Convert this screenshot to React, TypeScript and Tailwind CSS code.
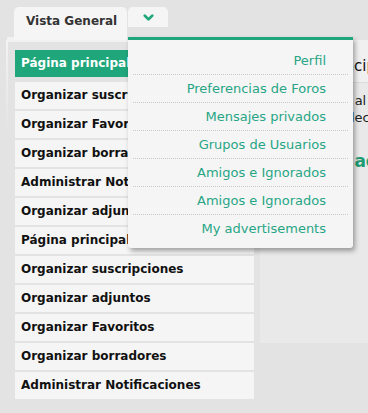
import { ChevronDown } from "lucide-react";

const menuItems = [
  "Página principal",
  "Organizar suscripciones",
  "Organizar Favoritos",
  "Organizar borradores",
  "Administrar Notificaciones",
  "Organizar adjuntos",
  "Página principal",
  "Organizar suscripciones",
  "Organizar adjuntos",
  "Organizar Favoritos",
  "Organizar borradores",
  "Administrar Notificaciones",
];

const dropdownItems = [
  "Perfil",
  "Preferencias de Foros",
  "Mensajes privados",
  "Grupos de Usuarios",
  "Amigos e Ignorados",
  "Amigos e Ignorados",
  "My advertisements",
];

export default function App() {
  return (
    <div className="relative h-[413px] w-full overflow-hidden bg-[#e3e3e3] font-['DejaVu_Sans',sans-serif]">
      {/* tabs */}
      <div className="flex h-[40px] items-start pl-[7px] pt-[7px]">
        <div className="h-[3px] w-[7px] self-end bg-[#f1f1f1]" />
        <div className="h-[33px] w-[113px] rounded-t-[5px] bg-[#f5f5f5] pl-[12px] pt-[6px] text-[12px] font-bold leading-[16px] text-[#333]">
          Vista General
        </div>
        <div className="ml-[1px] flex h-[20px] w-[40px] items-center justify-center rounded-t-[5px] bg-[#f5f5f5]">
          <ChevronDown className="h-[15px] w-[15px] text-[#1fa67a]" strokeWidth={4.5} />
        </div>
      </div>

      <div className="flex">
        {/* left column */}
        <div className="ml-[6px] flex w-[248px] border-t-2 border-[#f1f1f1]">
          <div className="h-[90px] w-[2px] bg-gradient-to-b from-[#f3f3f3] to-transparent" />
          <div className="flex flex-col gap-[2px] pl-[7px] pt-[8px]">
            {menuItems.map((item, i) => (
              <div
                key={i}
                className={
                  i === 0
                    ? "mb-[3px] h-[27px] w-[239px] bg-[#1fa67a] pl-[6px] text-[12px] font-bold leading-[27px] text-white"
                    : "h-[27px] w-[239px] bg-[#f5f5f5] pl-[6px] text-[12px] font-bold leading-[27px] text-[#111]"
                }
              >
                {item}
              </div>
            ))}
          </div>
        </div>

        {/* right panel */}
        <div className="ml-[6px] h-[303px] flex-1 overflow-hidden bg-[#e9e9e9]">
          <div className="h-[43px] whitespace-nowrap border-b border-[#dcdcdc] bg-[#f0f0f0] pl-[10px] pt-[17px] text-[15px] leading-[18px] text-[#111]">
            Página principal
          </div>
          <div className="whitespace-nowrap pt-[9px] text-[13px] leading-[17px] text-[#222]">
            <div className="pl-[18px]">Bienvenido al Panel de Control de Usuario</div>
            <div className="pl-[32px]">Puede seleccionar sus preferencias</div>
          </div>
          <div className="mt-[24px] whitespace-nowrap pl-[54px] text-[17px] font-bold leading-[22px] text-[#1e9c74]">
            Sus actividades
          </div>
        </div>
      </div>

      {/* dropdown */}
      <div className="absolute left-[128px] top-[37px] w-[225px] rounded-b-[3px] border-t-[3px] border-[#1fa67a] bg-[#f5f5f5] px-[5px] pb-[5px] pt-[7px] shadow-[2px_3px_5px_rgba(0,0,0,0.35)]">
        {dropdownItems.map((item, i) => (
          <div
            key={i}
            className={
              i < dropdownItems.length - 1
                ? "h-[28px] border-b border-dotted border-[#c8c8c8] pr-[22px] text-right text-[13px] leading-[27px] text-[#27a685]"
                : "h-[28px] pr-[22px] text-right text-[13px] leading-[27px] text-[#27a685]"
            }
          >
            {item}
          </div>
        ))}
      </div>
    </div>
  );
}
